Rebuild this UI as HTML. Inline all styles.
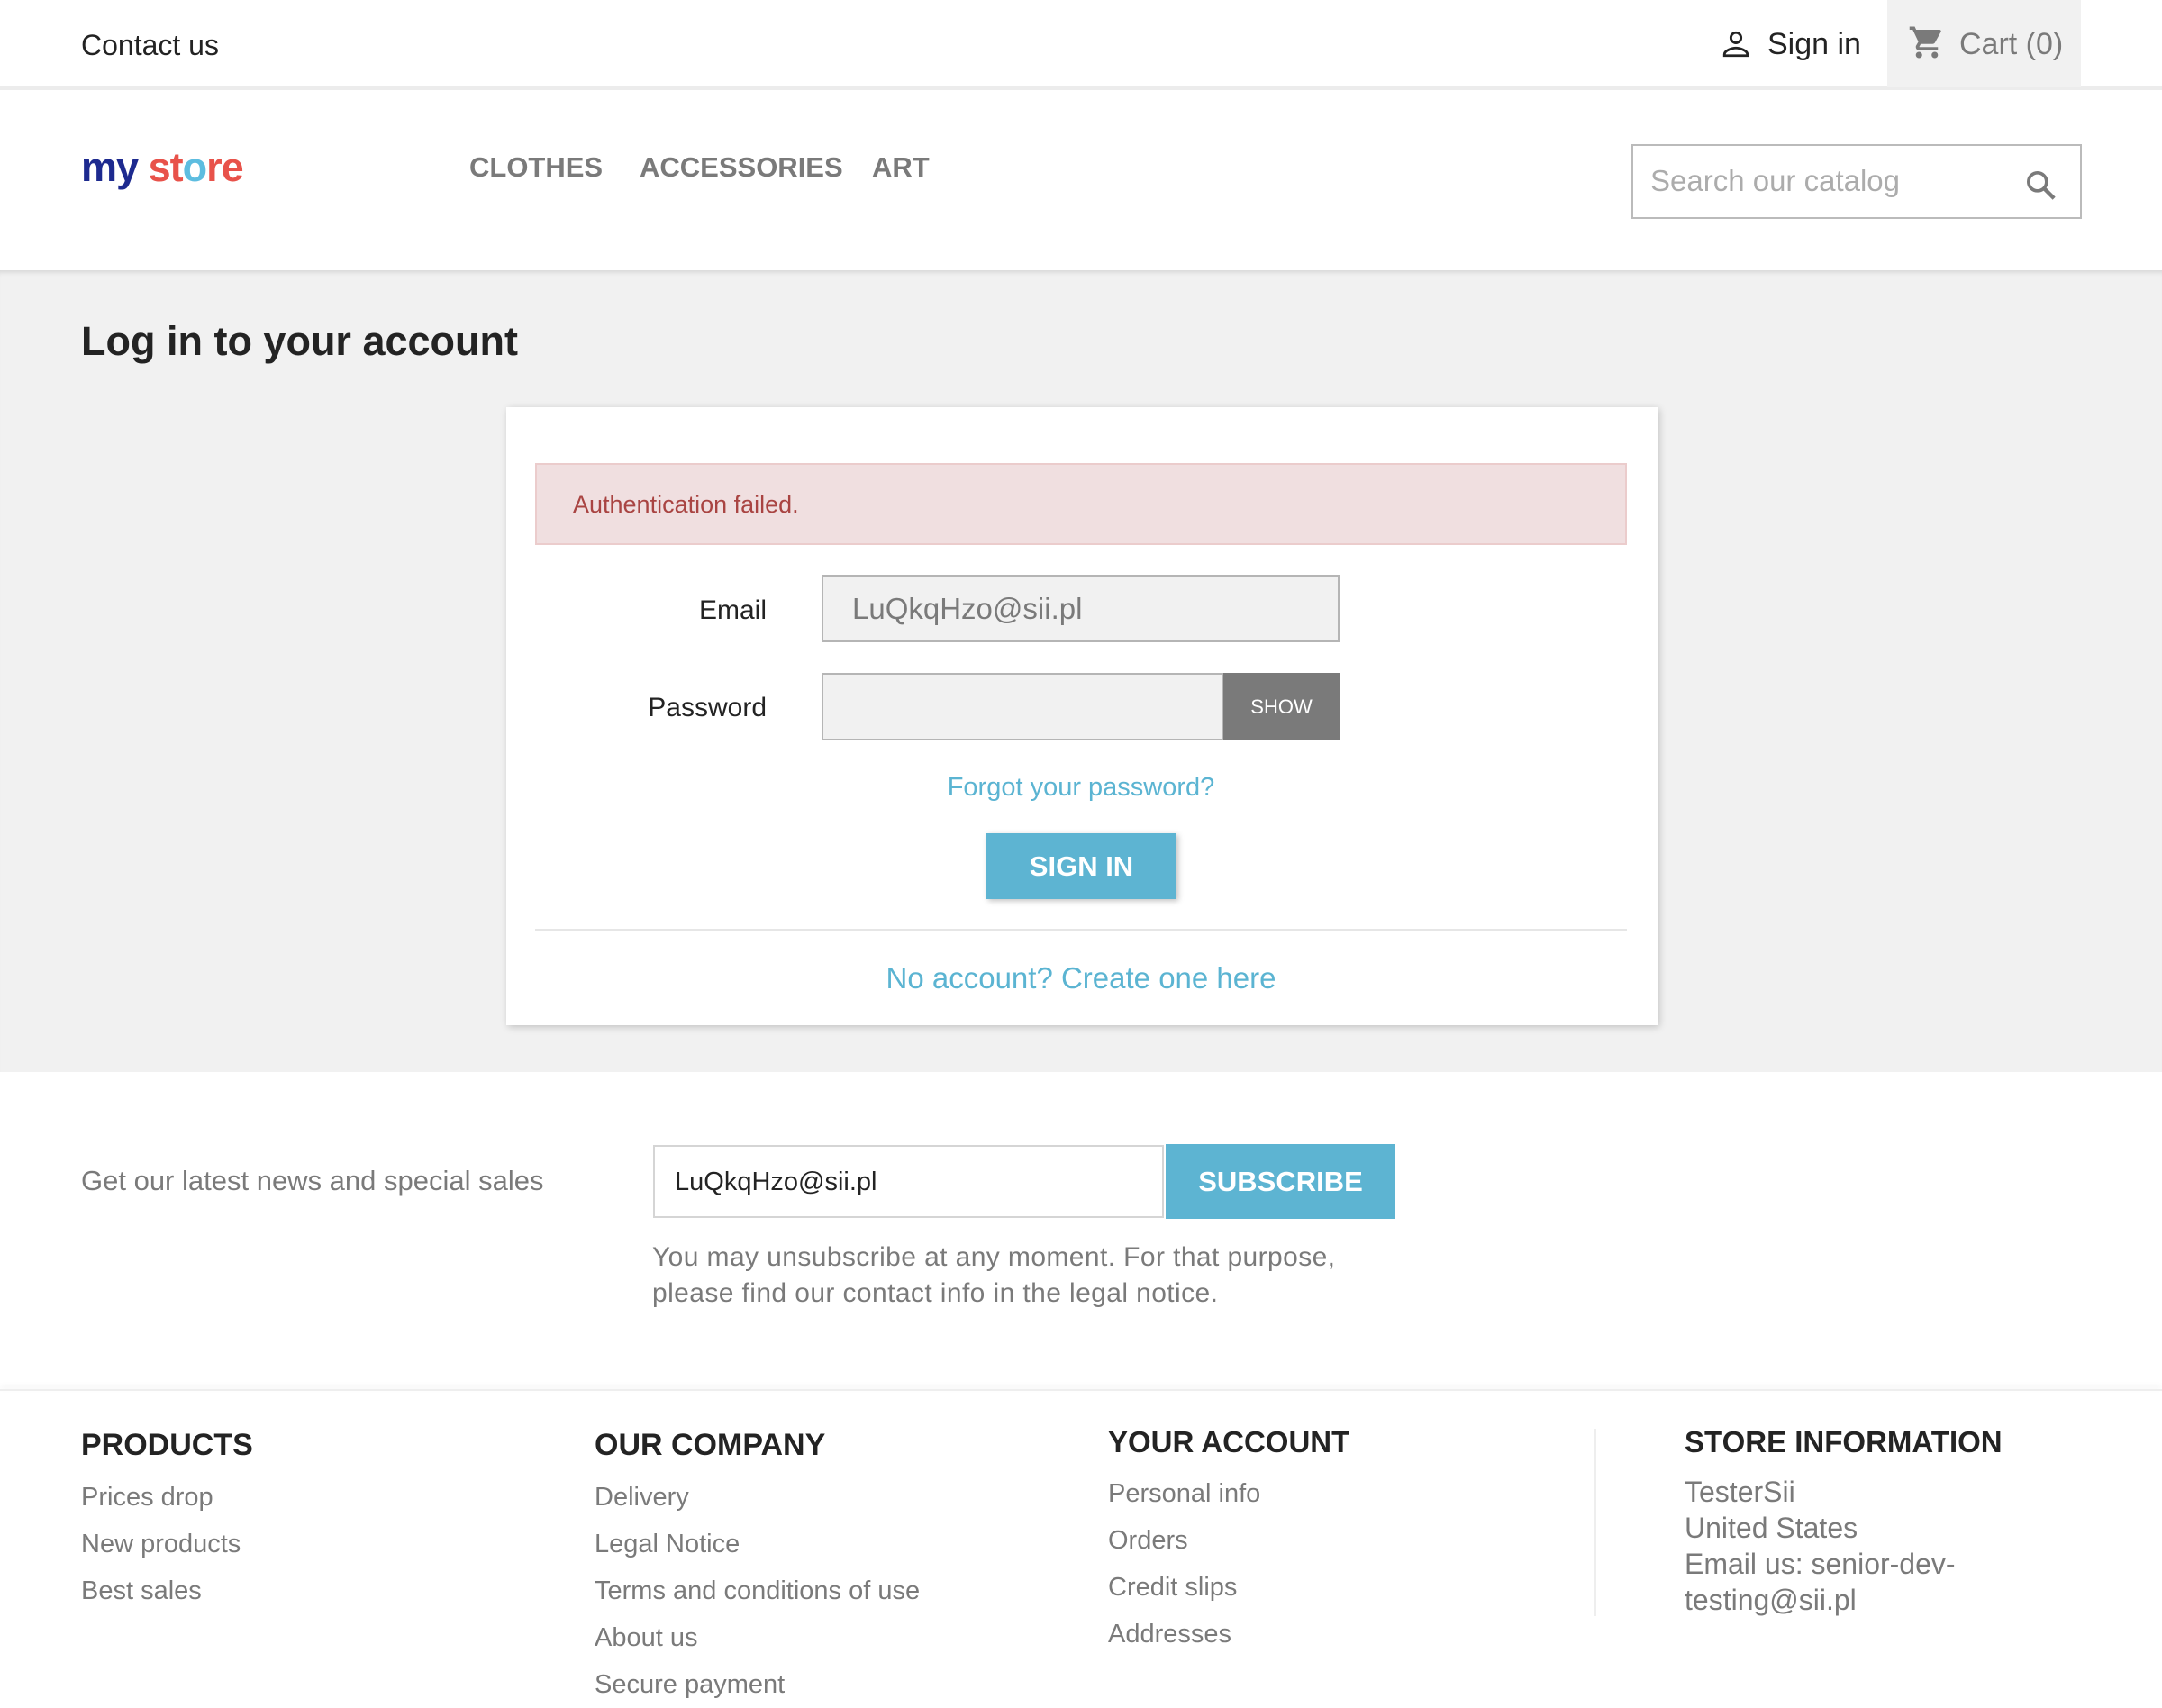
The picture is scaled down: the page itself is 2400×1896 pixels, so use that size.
<!DOCTYPE html>
<html><head><meta charset="utf-8"><style>
*{margin:0;padding:0;box-sizing:border-box}
body{width:2400px;height:1888px;overflow:hidden;background:#fff;font-family:"Liberation Sans",sans-serif;position:relative;color:#232323}
.a{position:absolute;white-space:nowrap}
</style></head><body>
<div class="a" style="left:0;top:0;width:2400px;height:98px;background:#fff"></div>
<div class="a" style="left:0;top:96px;width:2400px;height:4px;background:#ececec"></div>
<div class="a" style="left:90px;top:32px;font-size:32px;color:#232323">Contact us</div>
<svg class="a" style="left:1910px;top:32px" width="34" height="34" viewBox="0 0 24 24"><circle cx="12" cy="7" r="4" fill="none" stroke="#232323" stroke-width="2"/><path d="M3 21v-1c0-3 6-5 9-5s9 2 9 5v1z" fill="none" stroke="#232323" stroke-width="2"/></svg>
<div class="a" style="left:1962px;top:30px;font-size:34px;color:#232323">Sign in</div>
<div class="a" style="left:2095px;top:0;width:215px;height:97px;background:#f1f1f1"></div>
<svg class="a" style="left:2118px;top:26px" width="42" height="42" viewBox="0 0 24 24"><path fill="#7a7a7a" d="M7 18c-1.1 0-2 .9-2 2s.9 2 2 2 2-.9 2-2-.9-2-2-2zM1 2v2h2l3.6 7.6-1.4 2.4C5 14.3 5 14.6 5 15c0 1.1.9 2 2 2h12v-2H7.4c-.1 0-.2-.1-.2-.2v-.1l.9-1.7h7.4c.8 0 1.4-.4 1.7-1l3.6-6.5c.1-.2.2-.3.2-.5 0-.6-.4-1-1-1H5.2l-.9-2zm16 16c-1.1 0-2 .9-2 2s.9 2 2 2 2-.9 2-2-.9-2-2-2z"/></svg>
<div class="a" style="left:2175px;top:30px;font-size:34px;color:#7a7a7a">Cart (0)</div>

<div class="a" style="left:90px;top:156px;font-size:45px;font-weight:bold;letter-spacing:-1px;line-height:60px"><span style="color:#1d2a8f">my</span> <span style="color:#e8524a">st</span><span style="color:#5dbde0">o</span><span style="color:#e8524a">re</span></div>
<div class="a" style="left:521px;top:168px;font-size:31px;font-weight:bold;color:#7a7a7a">CLOTHES</div>
<div class="a" style="left:710px;top:168px;font-size:31px;font-weight:bold;color:#7a7a7a">ACCESSORIES</div>
<div class="a" style="left:968px;top:168px;font-size:31px;font-weight:bold;color:#7a7a7a">ART</div>
<div class="a" style="left:1811px;top:160px;width:500px;height:83px;border:2px solid #bbb;background:#fff"></div>
<div class="a" style="left:1832px;top:182px;font-size:33px;color:#acacac">Search our catalog</div>
<svg class="a" style="left:2246px;top:186px" width="40" height="40" viewBox="0 0 24 24"><circle cx="9.5" cy="9.5" r="6" fill="none" stroke="#7a7a7a" stroke-width="2.2"/><path d="M14 14l6.5 6.5" stroke="#7a7a7a" stroke-width="2.6"/></svg>

<div class="a" style="left:0;top:300px;width:2400px;height:890px;background:#f1f1f1;box-shadow:inset 0 6px 6px -4px rgba(0,0,0,.12)"></div>
<div class="a" style="left:90px;top:353px;font-size:45px;font-weight:bold;color:#232323">Log in to your account</div>
<div class="a" style="left:562px;top:452px;width:1278px;height:686px;background:#fff;box-shadow:2px 2px 8px rgba(0,0,0,.2)"></div>
<div class="a" style="left:594px;top:514px;width:1212px;height:91px;background:#f0dfe0;border:2px solid #ebcccc"></div>
<div class="a" style="left:636px;top:545px;font-size:27px;color:#a94442">Authentication failed.</div>
<div class="a" style="left:700px;top:661px;width:151px;text-align:right;font-size:30px;color:#232323">Email</div>
<div class="a" style="left:912px;top:638px;width:575px;height:75px;background:#f1f1f1;border:2px solid #b5b5b5"></div>
<div class="a" style="left:946px;top:657px;font-size:33px;color:#7a7a7a">LuQkqHzo@sii.pl</div>
<div class="a" style="left:650px;top:769px;width:201px;text-align:right;font-size:30px;color:#232323">Password</div>
<div class="a" style="left:912px;top:747px;width:447px;height:75px;background:#f1f1f1;border:2px solid #b5b5b5"></div>
<div class="a" style="left:1358px;top:747px;width:129px;height:75px;background:#7a7a7a;color:#fff;font-size:22px;text-align:center;line-height:75px">SHOW</div>
<div class="a" style="left:900px;top:858px;width:600px;text-align:center;font-size:29px;color:#5bb4d2">Forgot your password?</div>
<div class="a" style="left:1095px;top:925px;width:211px;height:73px;background:#5db4d2;box-shadow:2px 2px 6px rgba(0,0,0,.25);color:#fff;font-weight:bold;font-size:31px;text-align:center;line-height:73px">SIGN IN</div>
<div class="a" style="left:594px;top:1031px;width:1212px;height:2px;background:#e6e6e6"></div>
<div class="a" style="left:800px;top:1067px;width:800px;text-align:center;font-size:33px;color:#5bb4d2">No account? Create one here</div>

<div class="a" style="left:90px;top:1293px;font-size:31px;color:#7a7a7a">Get our latest news and special sales</div>
<div class="a" style="left:725px;top:1271px;width:567px;height:81px;border:2px solid #d5d5d5;background:#fff"></div>
<div class="a" style="left:749px;top:1296px;font-size:29px;color:#232323">LuQkqHzo@sii.pl</div>
<div class="a" style="left:1294px;top:1270px;width:255px;height:83px;background:#5db4d2;color:#fff;font-weight:bold;font-size:31px;text-align:center;line-height:83px">SUBSCRIBE</div>
<div class="a" style="left:724px;top:1376px;font-size:30px;color:#7a7a7a;line-height:40px;letter-spacing:0.4px">You may unsubscribe at any moment. For that purpose,<br>please find our contact info in the legal notice.</div>

<div class="a" style="left:0;top:1542px;width:2400px;height:2px;background:#eee;box-shadow:0 -3px 6px rgba(0,0,0,.08)"></div>
<div class="a" style="left:90px;top:1585px;font-size:34px;font-weight:bold;color:#232323">PRODUCTS</div>
<div class="a" style="left:90px;top:1636px;font-size:29px;color:#7a7a7a;line-height:52px">Prices drop<br>New products<br>Best sales</div>
<div class="a" style="left:660px;top:1585px;font-size:34px;font-weight:bold;color:#232323">OUR COMPANY</div>
<div class="a" style="left:660px;top:1636px;font-size:29px;color:#7a7a7a;line-height:52px">Delivery<br>Legal Notice<br>Terms and conditions of use<br>About us<br>Secure payment</div>
<div class="a" style="left:1230px;top:1582px;font-size:33px;font-weight:bold;color:#232323">YOUR ACCOUNT</div>
<div class="a" style="left:1230px;top:1632px;font-size:29px;color:#7a7a7a;line-height:52px">Personal info<br>Orders<br>Credit slips<br>Addresses</div>
<div class="a" style="left:1770px;top:1586px;width:2px;height:208px;background:#eee"></div>
<div class="a" style="left:1870px;top:1582px;font-size:33px;font-weight:bold;color:#232323">STORE INFORMATION</div>
<div class="a" style="left:1870px;top:1636px;font-size:32px;color:#7a7a7a;line-height:40px">TesterSii<br>United States<br>Email us: senior-dev-<br>testing@sii.pl</div>
</body></html>
